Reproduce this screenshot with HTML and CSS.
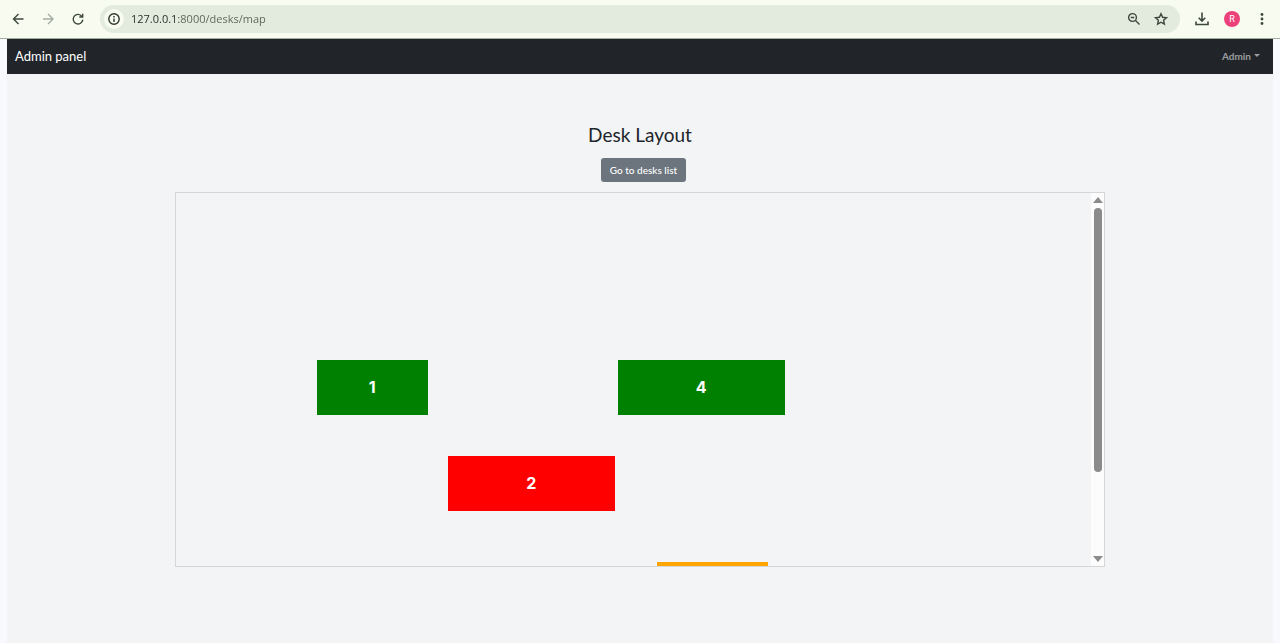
FILE: index.html
```html
<!DOCTYPE html>
<html lang="en">
<head>
<meta charset="utf-8">
<title>Desk Layout</title>
<link rel="stylesheet" href="styles.css">
</head>
<body>
<header class="toolbar">
  <button class="tool" aria-label="Back"><svg viewBox="0 0 16 16"><path d="M13.500 8H4M8.500 3l-5 5 5 5"/></svg></button>
  <button class="tool tool-off" aria-label="Forward" disabled><svg viewBox="0 0 16 16"><path d="M3 8h9.500M8 3l5 5-5 5"/></svg></button>
  <button class="tool" aria-label="Reload"><svg viewBox="0 0 16 16"><path d="M12 5.500A4.800 4.800 0 1 0 12.800 8.600M12.700 2.800V6H9.300"/></svg></button>
  <div class="address">
    <button class="site-info" aria-label="Site information"><svg viewBox="0 0 16 16"><circle cx="8" cy="8" r="5.200"/><path d="M8 7.500V11M8 5v1.400"/></svg></button>
    <input class="url" type="text" aria-label="Address" value="127.0.0.1:8000/desks/map">
    <button class="tool" aria-label="Zoom"><svg viewBox="0 0 16 16"><circle cx="6.500" cy="6.500" r="3.900"/><path d="M9.500 9.500L13.500 13.500M4.800 6.500h3.400"/></svg></button>
    <button class="tool" aria-label="Bookmark"><svg viewBox="0 0 16 16"><path d="M8 2.700l1.600 3.600 3.900.4-2.900 2.600.8 3.900L8 11.200l-3.400 2 .8-3.900-2.900-2.600 3.900-.4z"/></svg></button>
  </div>
  <button class="tool" aria-label="Downloads"><svg class="heavy" viewBox="0 0 16 16"><path d="M8 1.500V10M4.700 6.800L8 10.100l3.300-3.300M2 10.500V13.500h12v-3"/></svg></button>
  <button class="avatar" aria-label="Profile">R</button>
  <button class="tool" aria-label="Menu"><svg class="dots" viewBox="0 0 16 16"><circle cx="8" cy="3.500" r="1.400"/><circle cx="8" cy="8" r="1.400"/><circle cx="8" cy="12.500" r="1.400"/></svg></button>
</header>
<div class="page">
  <nav class="navbar">
    <a class="brand" href="#">Admin panel</a>
    <button class="account">Admin<span class="caret"></span></button>
  </nav>
  <main class="content">
    <h1 class="title">Desk Layout</h1>
    <a class="list-link" href="#">Go to desks list</a>
    <section class="map" aria-label="Desk map">
      <div class="canvas">
        <div class="desk desk-1 free">1</div>
        <div class="desk desk-2 wide taken">2</div>
        <div class="desk desk-3 pending"></div>
        <div class="desk desk-4 wide free">4</div>
      </div>
      <div class="scrollbar" aria-hidden="true">
        <span class="arrow arrow-up"></span>
        <span class="track"><span class="thumb"></span></span>
        <span class="arrow arrow-down"></span>
      </div>
    </section>
  </main>
</div>
</body>
</html>
```
FILE: styles.css
```css
* { box-sizing: border-box; }
body {
  margin: 0;
  min-height: 100vh;
  display: flex;
  flex-direction: column;
  background: #f8f9fc;
  font-family: Lato, "Open Sans", sans-serif;
  color: #212529;
}
button { border: 0; padding: 0; background: none; font: inherit; color: inherit; }

.toolbar {
  display: flex;
  align-items: center;
  gap: 14px;
  height: 39px;
  padding: 0 10px;
  background: #f8fcf0;
  border-bottom: 1px solid #a3ada0;
}
.tool { display: flex; width: 16px; height: 16px; color: #3d473b; }
.tool-off { color: #a5aca1; }
svg { width: 16px; height: 16px; fill: none; stroke: currentColor; stroke-width: 1.4; }
.heavy { stroke-width: 1.6; }
.dots { fill: currentColor; stroke: none; }
.address {
  flex: 1;
  display: flex;
  align-items: center;
  gap: 11px;
  height: 28px;
  padding: 0 11px 0 4px;
  border-radius: 14px;
  background: #e2ebde;
}
.site-info {
  display: flex;
  align-items: center;
  justify-content: center;
  width: 20px;
  height: 20px;
  border-radius: 50%;
  background: #f8fcf0;
  color: #2d352b;
}
.url {
  flex: 1;
  min-width: 0;
  margin-left: -4px;
  border: 0;
  padding: 0;
  outline: 0;
  font: 11px/20px "Open Sans", sans-serif;
  background: linear-gradient(90deg, #252c23 48px, #5a6456 48px);
  background-clip: text;
  color: transparent;
}
.avatar {
  width: 16px;
  height: 16px;
  border-radius: 50%;
  background: #ec407a;
  color: #fff;
  font: 9px/16px Roboto, sans-serif;
}

.page {
  flex: 1;
  display: flex;
  flex-direction: column;
  margin: 0 7px;
  background: #f3f4f6;
}
.navbar {
  display: flex;
  align-items: center;
  justify-content: space-between;
  height: 35px;
  padding: 0 13px 2px 8px;
  background: #212529;
}
.brand { color: #fff; font-size: 13px; text-decoration: none; }
.account { display: flex; align-items: center; gap: 3px; color: #9b9d9f; font-size: 10px; font-weight: 700; }
.caret { border: 3px solid transparent; border-top-color: currentColor; border-bottom: 0; }

.content {
  display: flex;
  flex-direction: column;
  align-items: center;
  padding: 48px 0;
}
.title { margin: 0 0 10px; font-size: 19px; line-height: 26px; font-weight: 400; }
.list-link {
  margin: 0 0 10px 7px;
  padding: 0 9px;
  border-radius: 3px;
  background: #6c757d;
  color: #fff;
  font-size: 10px;
  font-weight: 500;
  line-height: 24px;
  text-decoration: none;
}
.map {
  display: flex;
  width: 73.5%;
  height: 375px;
  border: 1px solid #d5d6d8;
}
.canvas { position: relative; flex: 1; overflow: hidden; }
.desk {
  position: absolute;
  width: 111px;
  height: 55px;
  color: #fff;
  font: 700 16px/54px Inter, sans-serif;
  text-align: center;
}
.wide { width: 167px; }
.free { background: #008000; }
.taken { background: #f00; }
.pending { background: #ffa500; }
.desk-1 { left: 141px; top: 167px; }
.desk-2 { left: 272px; top: 263px; }
.desk-3 { left: 481px; top: 369px; }
.desk-4 { left: 442px; top: 167px; }
.scrollbar {
  display: flex;
  flex-direction: column;
  align-items: center;
  width: 13px;
  padding: 4px 0;
  background: #fcfcfc;
}
.arrow { border: 5px solid transparent; }
.arrow-up { border-top: 0; border-bottom: 6px solid #8b8b8b; }
.arrow-down { border-bottom: 0; border-top: 6px solid #8b8b8b; }
.track { flex: 1; width: 8px; padding: 5px 0; }
.thumb { display: block; height: 77%; border-radius: 4px; background: #8b8b8b; }
```
